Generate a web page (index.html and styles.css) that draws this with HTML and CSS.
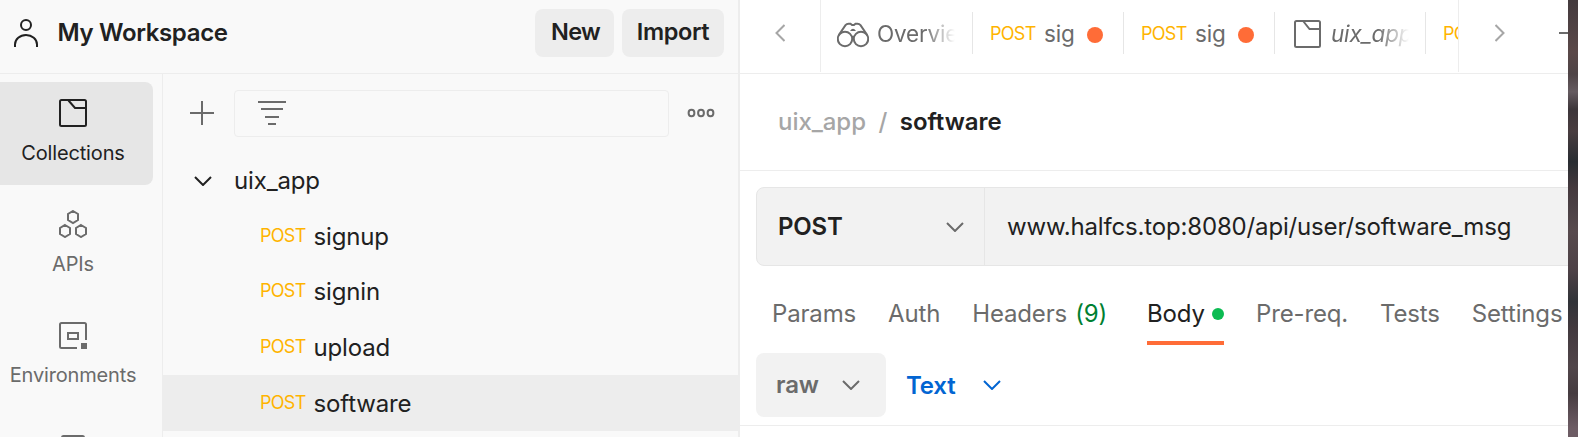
FILE: index.html
```
<!DOCTYPE html>
<html lang="en">
<head>
<meta charset="utf-8">
<title>My Workspace</title>
<link rel="stylesheet" href="styles.css">
</head>
<body>
<div class="app">
  <div class="side">
    <header class="workspace">
      <svg class="user" width="24" height="28" viewBox="0 0 24 28"><circle cx="12" cy="6" r="5"/><path d="M1 28v-2.500a11 9.500 0 0 1 22 0V28"/></svg>
      <h1 class="workspace-name">My Workspace</h1>
      <button class="btn btn-new">New</button>
      <button class="btn btn-import">Import</button>
    </header>
    <div class="side-body">
      <nav class="rail">
        <a class="rail-item active">
          <svg class="icon" width="28" height="28" viewBox="0 0 28 28"><rect x="1" y="1" width="26" height="26" rx="1.500"/><path d="M9.500 1.500 16 9h11"/></svg>
          <span>Collections</span>
        </a>
        <a class="rail-item">
          <svg class="icon" width="28" height="28" viewBox="0 0 28 28"><path d="M14 1l5 3v6l-5 3-5-3V4zM6 15l5 3v6l-5 3-5-3v-6zM22 15l5 3v6l-5 3-5-3v-6z"/></svg>
          <span>APIs</span>
        </a>
        <a class="rail-item">
          <svg class="icon" width="28" height="28" viewBox="0 0 28 28"><path d="M18 27H2.500A1.500 1.500 0 0 1 1 25.500v-22A1.500 1.500 0 0 1 2.500 2h23A1.500 1.500 0 0 1 27 3.500V19"/><path d="M9 12h10v6H9z"/><path class="solid" d="M22 22h6v6h-6z"/></svg>
          <span>Environments</span>
        </a>
        <a class="rail-item">
          <svg class="icon" width="28" height="28" viewBox="0 0 28 28"><rect x="3" y="4" width="22" height="24" rx="1.500"/></svg>
        </a>
      </nav>
      <section class="collections">
        <div class="toolbar">
          <svg class="icon" width="24" height="24" viewBox="0 0 24 24"><path d="M12 0v24M0 12h24"/></svg>
          <div class="filter"><svg class="icon" width="28" height="24" viewBox="0 0 28 24"><path d="M0 1h28M3 8h22M7 16h14M10 23h8"/></svg></div>
          <svg class="icon" width="28" height="10" viewBox="0 0 28 10"><ellipse cx="4.500" cy="5" rx="2.900" ry="3.200"/><ellipse cx="14" cy="5" rx="2.900" ry="3.200"/><ellipse cx="23.500" cy="5" rx="2.900" ry="3.200"/></svg>
        </div>
        <div class="row folder"><svg class="chev dark" width="18" height="10" viewBox="0 0 18 10"><path d="M1 1l8 8 8-8"/></svg><span>uix_app</span></div>
        <div class="row first"><b class="method">POST</b><span>signup</span></div>
        <div class="row"><b class="method">POST</b><span>signin</span></div>
        <div class="row"><b class="method">POST</b><span>upload</span></div>
        <div class="row selected"><b class="method">POST</b><span>software</span></div>
      </section>
    </div>
  </div>
  <main class="main">
    <div class="tabbar">
      <div class="prev"><svg class="chev" width="10" height="18" viewBox="0 0 10 18"><path d="M9.500 1 1.500 9l8 8"/></svg></div>
      <div class="tabs">
        <div class="tab overview">
          <svg class="icon" width="32" height="26" viewBox="0 0 32 26"><circle cx="8" cy="17" r="7.200"/><circle cx="24" cy="17" r="7.200"/><path d="M1.800 13 8.500 3.200Q9.700 1.800 11.500 1.800h2L15 3h2l1.500-1.200h2q1.800 0 3 1.400L30.200 13M14.800 15.500q1.200-1.500 2.400 0"/><path class="solid" d="M13 9q3-4.500 6 0z"/></svg>
          <span class="fade">Overview</span>
        </div>
        <div class="tab request"><b class="method">POST</b><span class="name">sig</span><i class="unsaved"></i></div>
        <div class="tab request"><b class="method">POST</b><span class="name">sig</span><i class="unsaved"></i></div>
        <div class="tab preview">
          <svg class="icon" width="28" height="28" viewBox="0 0 28 28"><rect x="1" y="1" width="25" height="26" rx="1.500"/><path d="M9.500 1.500 15.500 9H26"/></svg>
          <span class="fade">uix_app</span>
        </div>
        <div class="tab request"><b class="method">POST</b></div>
      </div>
      <div class="next"><svg class="chev" width="10" height="18" viewBox="0 0 10 18"><path d="M.5 1l8 8-8 8"/></svg></div>
      <i class="minus"></i>
    </div>
    <div class="crumbs"><span class="parent">uix_app</span><span class="slash">/</span><span>software</span></div>
    <div class="url">
      <div class="verb"><span>POST</span><svg class="chev mid" width="18" height="10" viewBox="0 0 18 10"><path d="M1 1l8 8 8-8"/></svg></div>
      <div class="address">www.halfcs.top:8080/api/user/software_msg</div>
    </div>
    <div class="sections">
      <span class="section params">Params</span>
      <span class="section auth">Auth</span>
      <span class="section headers">Headers <em>(9)</em></span>
      <span class="section body">Body<i class="dot"></i></span>
      <span class="section prereq">Pre-req.</span>
      <span class="section tests">Tests</span>
      <span class="section">Settings</span>
    </div>
    <div class="format">
      <div class="raw"><span>raw</span><svg class="chev mid" width="18" height="10" viewBox="0 0 18 10"><path d="M1 1l8 8 8-8"/></svg></div>
      <div class="lang"><span>Text</span><svg class="chev blue" width="18" height="10" viewBox="0 0 18 10"><path d="M1 1l8 8 8-8"/></svg></div>
    </div>
  </main>
  <div class="desktop"></div>
</div>
</body>
</html>
```
FILE: styles.css
```
* { box-sizing: border-box; }
body { margin: 0; font-family: Inter, "Liberation Sans", sans-serif; font-size: 24px; line-height: 32px; letter-spacing: -.16px; color: #212121; }
svg { display: block; flex: none; fill: none; stroke-width: 2; }
.icon { stroke: #6b6b6b; }
.icon .solid { fill: #6b6b6b; stroke: none; }
.chev { stroke: #a6a6a6; }
.chev.dark { stroke: #212121; }
.chev.mid { stroke: #6b6b6b; }
.chev.blue { stroke: #0265d2; }
.app { display: flex; width: 1578px; height: 437px; overflow: hidden; background: #fff; }
.side { display: flex; flex-direction: column; flex: none; width: 740px; height: 437px; background: #f9f9f9; border-right: 2px solid #ededed; }

.workspace { display: flex; align-items: flex-start; flex: none; height: 74px; border-bottom: 1px solid #ededed; padding-left: 14px; }
.user { margin-top: 19px; stroke: #212121; }
.workspace-name { margin: 17px 0 0 19.500px; width: 477.500px; font-size: 24px; line-height: 32px; font-weight: 600; letter-spacing: -.35px; }
.btn { flex: none; height: 48px; margin-top: 9px; padding: 0 0 3px; border: 0; border-radius: 8px; background: #ededed; color: #212121; font: 600 23.500px/32px Inter, sans-serif; letter-spacing: -.4px; }
.btn-new { width: 79px; padding-left: 2px; letter-spacing: -.7px; }
.btn-import { width: 102px; margin-left: 8px; }

.side-body { display: flex; flex: 1; min-height: 0; }
.rail { display: flex; flex-direction: column; gap: 8px; flex: none; width: 163px; padding-top: 8px; border-right: 1px solid #ededed; overflow: hidden; }
.rail-item { display: flex; flex-direction: column; align-items: center; flex: none; width: 153px; height: 103px; padding: 17px 7px 0 0; border-radius: 0 8px 8px 0; font-size: 20px; line-height: 28px; color: #6b6b6b; }
.rail-item span { margin-top: 12px; }
.rail-item.active { background: #e6e6e6; color: #212121; }
.rail-item.active .icon { stroke: #212121; }

.collections { flex: 1; overflow: hidden; }
.toolbar { display: flex; align-items: center; height: 78px; padding: 0 0 1px 27px; }
.filter { display: flex; align-items: center; width: 435px; height: 47px; margin: 1px 17.500px 0 20px; padding-left: 23px; border: 1px solid #ededed; border-radius: 4px; }
.row { display: flex; align-items: center; height: 56px; padding: 2px 0 0 97px; }
.row.first { height: 55px; }
.folder { padding-left: 31px; }
.folder span { margin-left: 22px; }
.row.selected { background: #ededed; }
.method { font-size: 18px; font-weight: 400; color: #ffb400; letter-spacing: -.7px; }
.row .method { width: 53.500px; padding-bottom: 2px; }

.main { flex: none; width: 828px; background: #fff; overflow: hidden; }
.tabbar { display: flex; height: 74px; border-bottom: 1px solid #ededed; }
.prev { width: 81px; height: 72px; padding: 24px 0 0 35px; border-right: 1px solid #ededed; }
.tabs { display: flex; width: 637px; overflow: hidden; color: #6b6b6b; font-size: 22.500px; letter-spacing: -.2px; }
.tab { display: flex; align-items: center; flex: none; width: 151px; height: 42px; margin-top: 12px; padding-top: 1px; border-right: 1px solid #e6e6e6; }
.tab.overview { width: 152px; padding-left: 16px; }
.overview .icon { margin-top: 2px; }
.overview .fade { width: 78px; margin-left: 8px; }
.fade { overflow: hidden; white-space: nowrap; -webkit-mask-image: linear-gradient(to right, #000 60%, transparent); mask-image: linear-gradient(to right, #000 60%, transparent); }
.request { padding-left: 17px; }
.request .method { width: 54px; }
.request .name { width: 30px; white-space: nowrap; }
.unsaved { width: 16px; height: 16px; margin: 3px 0 0 13px; border-radius: 50%; background: #ff6c37; }
.preview { padding-left: 19px; font-style: italic; }
.preview .fade { width: 78px; margin-left: 9px; }
.next { width: 101px; height: 72px; padding: 24px 0 0 36px; border-left: 1px solid #ededed; }
.minus { width: 9px; height: 2px; margin-top: 32px; background: #6b6b6b; }

.crumbs { display: flex; align-items: center; height: 97px; padding-left: 38px; border-bottom: 1px solid #ededed; font-weight: 600; letter-spacing: -.05px; }
.crumbs .parent, .crumbs .slash { color: #a6a6a6; font-weight: 500; }
.slash { margin: 0 12.500px; }
.url { display: flex; width: 830px; height: 79px; margin: 16px 0 0 16px; border: 1px solid #e6e6e6; border-radius: 8px; background: #f2f2f2; }
.verb { display: flex; align-items: center; justify-content: space-between; width: 228px; padding: 0 20px 0 21px; border-right: 1px solid #e6e6e6; font-weight: 600; }
.address { padding: 23px 0 0 22px; }
.sections { display: flex; height: 79px; padding: 32px 0 0 32px; color: #6b6b6b; white-space: nowrap; }
.section { flex: none; margin-right: 32px; }
.section em { margin-left: 1.500px; font-style: normal; color: #007f31; }
.section.body { display: flex; width: 77px; height: 47px; margin-left: 8px; border-bottom: 4px solid #ff6c37; color: #212121; }
.dot { width: 12px; height: 12px; margin: 10px 0 0 auto; border-radius: 50%; background: #0cbb52; }
.format { display: flex; height: 81px; padding: 8px 0 0 16px; border-bottom: 1px solid #ededed; font-weight: 600; }
.raw, .lang { display: flex; align-items: center; height: 64px; }
.raw { width: 130px; padding: 0 26px 0 20px; justify-content: space-between; border-radius: 8px; background: #f2f2f2; color: #6b6b6b; }
.lang { margin-left: 20px; padding-top: 2px; color: #0265d2; }
.lang .chev { margin: -2px 0 0 27px; }
.desktop { flex: none; width: 10px; background: linear-gradient(#443b3e 0, #5a4848 12%, #4f4446 17%, #655b60 21%, #3d363a 25%, #493d40 30%, #292d32 37%, #44393d 43%, #4a4044 47%, #574a4d 53%, #4d4146 62%, #313338 69%, #42393e 75%, #51464a 84%, #463c40 90%, #6d5c64 98%); }
```
